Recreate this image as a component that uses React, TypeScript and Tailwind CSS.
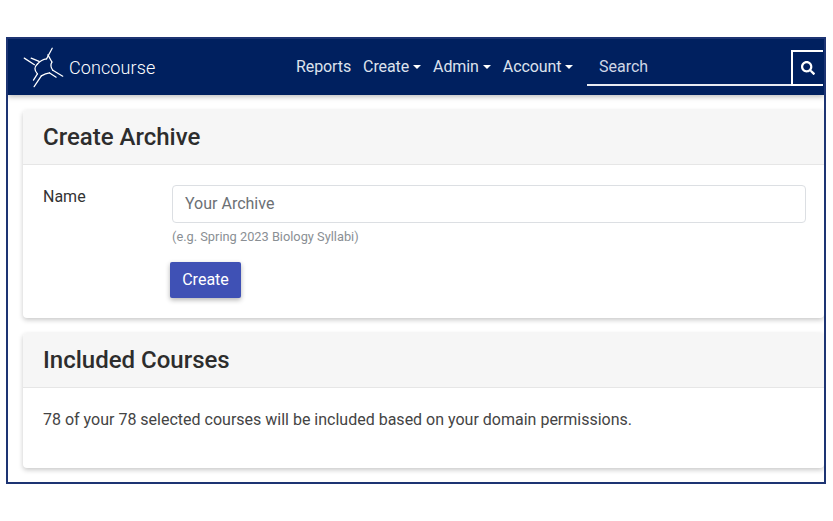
import React from "react";

function Caret() {
  return <span className="ml-[4px] inline-block h-0 w-0 border-x-[4px] border-t-[4px] border-x-transparent border-t-white" />;
}

function NavItem({ label, caret }: { label: string; caret?: boolean }) {
  return (
    <span className="flex items-center text-[16px] tracking-[-0.1px] text-[#dde2ed]">
      {label}
      {caret && <Caret />}
    </span>
  );
}

function Logo() {
  return (
    <svg viewBox="60 55 140 140" className="h-[46px] w-[46px] shrink-0" fill="none" stroke="white" strokeWidth="3.8" strokeLinecap="round" strokeLinejoin="round">
      <path d="M73 98 L104 118" />
      <path d="M94 98 L118 108" />
      <path d="M158 68 L141 100" />
      <path d="M145 88 L157 110" />
      <path d="M190 153 L160 135" />
      <path d="M170 156 L150 143" />
      <path d="M125 152 L103 185" />
      <path d="M101 165 L113 146" />
      <path d="M113 116 Q125 102 141 100" />
      <path d="M157 110 Q150 122 160 135" />
      <path d="M150 143 Q138 145 125 152" />
      <path d="M113 146 Q98 130 113 116" />
    </svg>
  );
}

function Card({ title, children }: { title: string; children: React.ReactNode }) {
  return (
    <section className="rounded-[4px] bg-white shadow-[0_2px_5px_rgba(0,0,0,0.22)]">
      <div className="flex h-[55px] items-center rounded-t-[4px] border-b border-[#e6e6e6] bg-[#f6f6f6] pl-[20px]">
        <h2 className="text-[24px] font-medium text-[#2d2d2d]">{title}</h2>
      </div>
      {children}
    </section>
  );
}

export default function App() {
  return (
    <div className="h-[521px] w-[833px] bg-white pl-[6px] pt-[37px] font-['Roboto',sans-serif]">
      <div className="h-[447px] w-[820px] overflow-hidden border-2 border-[#1d3473] bg-white">
        <header className="flex h-[56px] items-center bg-[#00205f] shadow-[0_2px_5px_rgba(0,0,0,0.25)]">
          <div className="flex w-[288px] items-center pl-[12px]">
            <Logo />
            <span className="ml-[3px] mt-[1px] text-[18px] font-light tracking-[0.1px] text-white">Concourse</span>
          </div>
          <nav className="flex w-[291px] items-center gap-[12px]">
            <NavItem label="Reports" />
            <NavItem label="Create" caret />
            <NavItem label="Admin" caret />
            <NavItem label="Account" caret />
          </nav>
          <div className="mb-[-2px] flex h-[36px] w-[236px]">
            <div className="flex flex-1 items-center border-b-2 border-[#e8ebf2] pl-[12px] text-[16px] text-[#cfd6e6]">Search</div>
            <div className="flex w-[32px] items-center justify-center border-2 border-r-0 border-white text-white">
              <svg viewBox="0 0 512 512" className="h-[14px] w-[14px]" fill="currentColor">
                <path d="M505 442.700L405.300 343c-4.500-4.500-10.600-7-17-7H372c27.600-35.300 44-79.700 44-128C416 93.100 322.900 0 208 0S0 93.100 0 208s93.100 208 208 208c48.300 0 92.700-16.400 128-44v16.300c0 6.400 2.500 12.500 7 17l99.700 99.700c9.400 9.400 24.600 9.400 33.900 0l28.300-28.300c9.400-9.400 9.400-24.600.1-34zM208 336c-70.700 0-128-57.200-128-128 0-70.700 57.200-128 128-128 70.700 0 128 57.200 128 128 0 70.700-57.200 128-128 128z" />
              </svg>
            </div>
          </div>
        </header>
        <main className="flex flex-col gap-[15px] pl-[15px] pt-[15px]">
          <Card title="Create Archive">
            <div className="flex h-[153px] pl-[20px] pt-[20px]">
              <label className="w-[129px] text-[16px] text-[#333]">Name</label>
              <div className="flex flex-col items-start">
                <div className="flex h-[38px] w-[634px] items-center rounded-[4px] border border-[#dcdfe3] bg-white pl-[12px] text-[16px] text-[#6c7075]">Your Archive</div>
                <p className="mt-[4px] text-[12.8px] text-[#8a8f94]">(e.g. Spring 2023 Biology Syllabi)</p>
                <button className="-ml-[2px] mt-[16px] h-[36px] w-[71px] rounded-[2px] bg-[#3f51b5] text-[16px] text-white shadow-[0_2px_5px_rgba(0,0,0,0.3)]">Create</button>
              </div>
            </div>
          </Card>
          <Card title="Included Courses">
            <div className="h-[80px] pl-[20px] pt-[20px] text-[16px] text-[#444]">78 of your 78 selected courses will be included based on your domain permissions.</div>
          </Card>
        </main>
      </div>
    </div>
  );
}
